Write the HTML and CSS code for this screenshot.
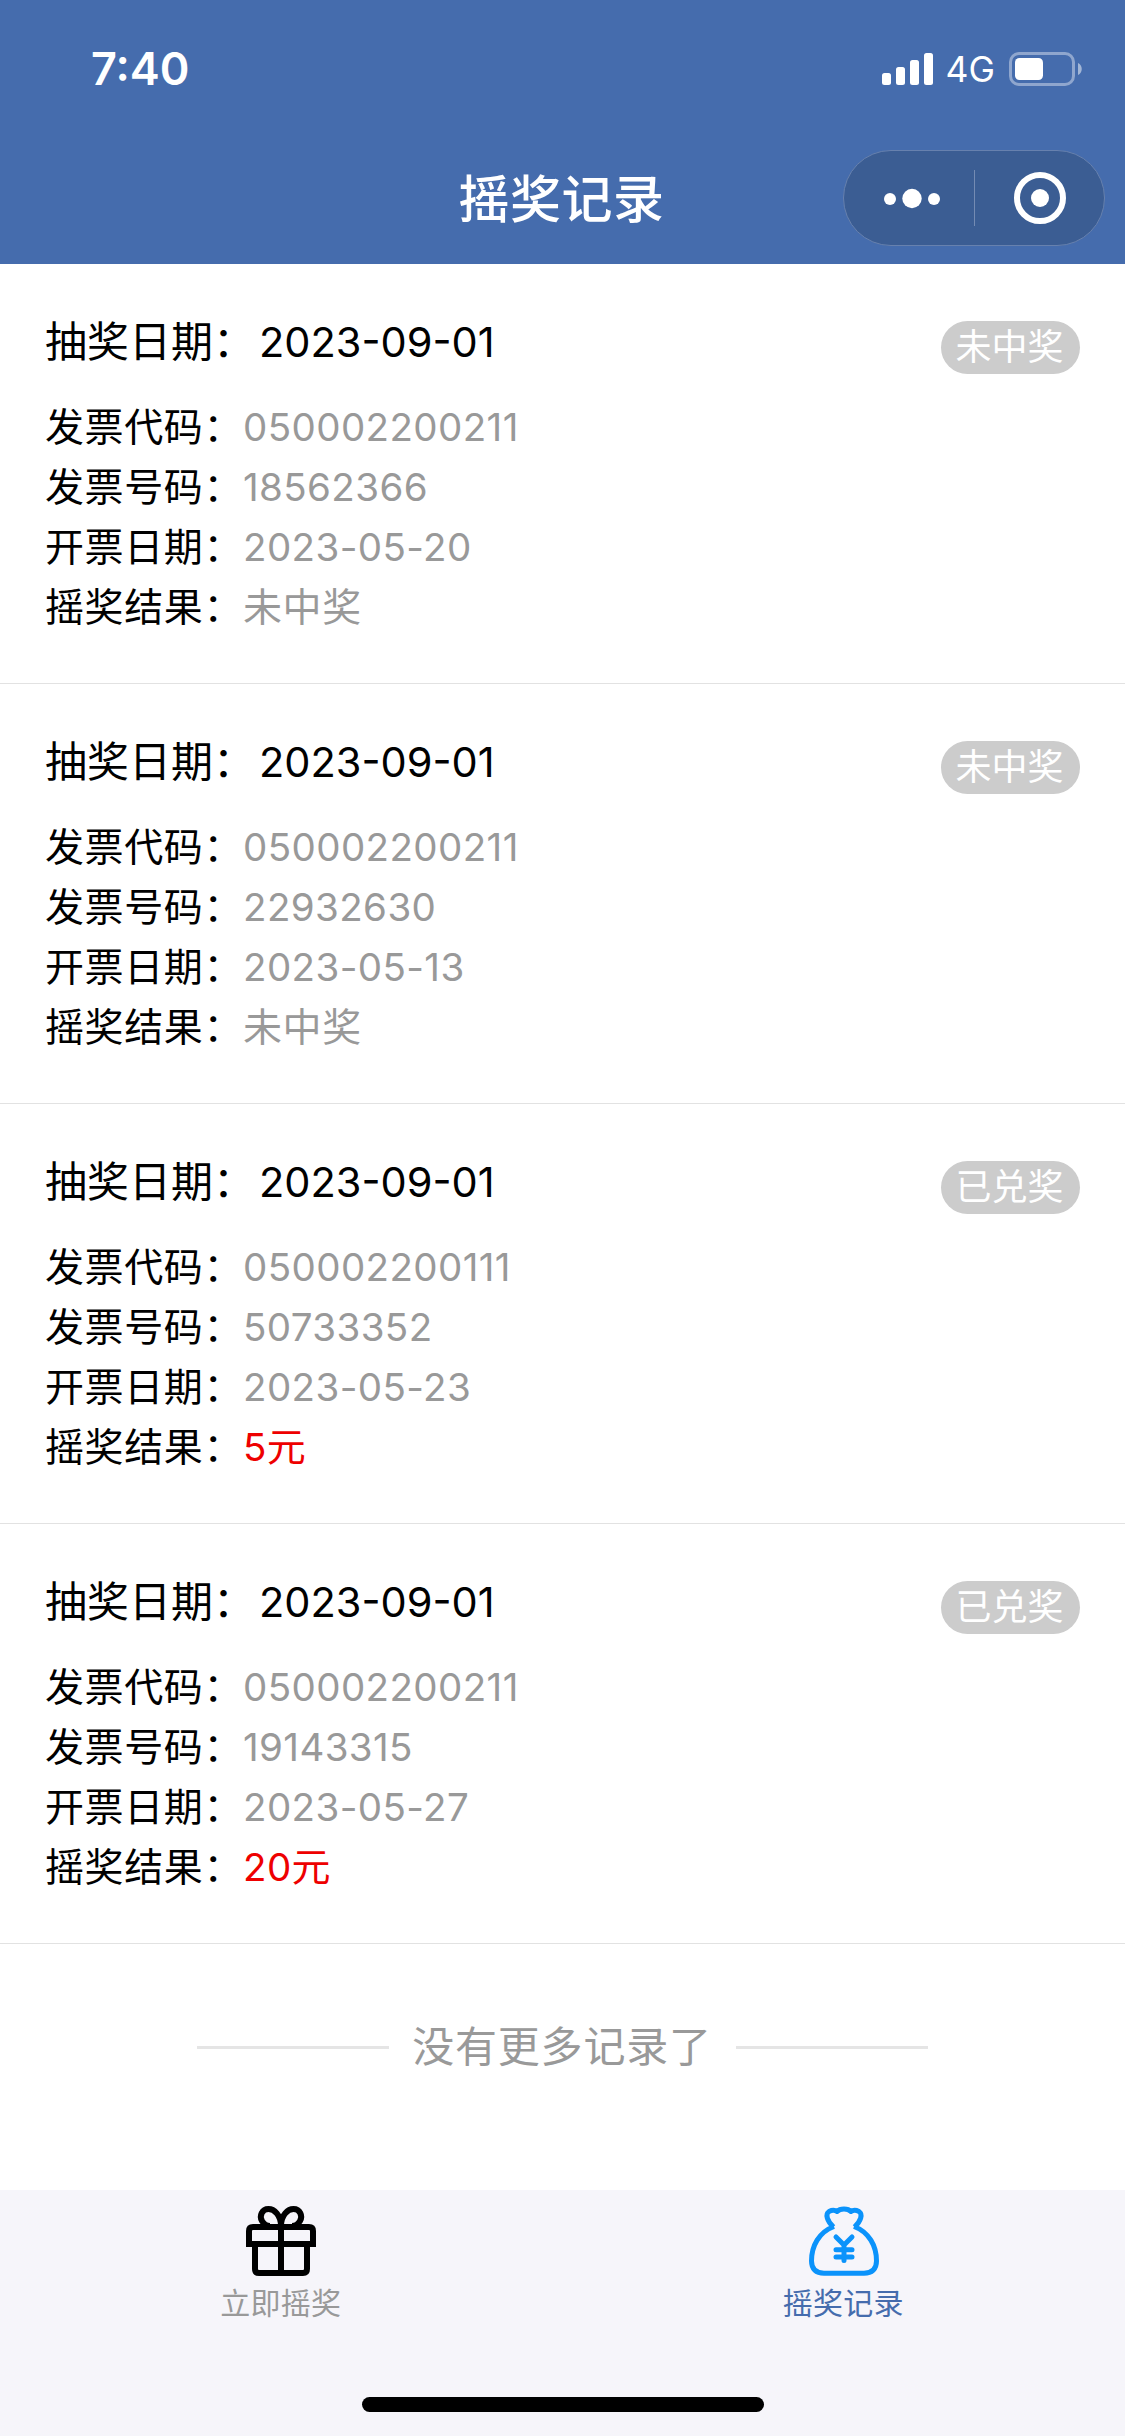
FILE: index.html
```html
<!DOCTYPE html>
<html lang="zh-CN">
<head>
<meta charset="utf-8">
<title>摇奖记录</title>
<link rel="stylesheet" href="styles.css">
</head>
<body>
<header class="header">
  <div class="status">
    <span class="time">7:40</span>
    <div class="status-icons">
      <svg class="signal" width="51" height="32" viewBox="0 0 51 32" fill="#fff"><rect x="0" y="20" width="9" height="12" rx="2.5"/><rect x="14" y="14" width="9" height="18" rx="2.5"/><rect x="28" y="7" width="9" height="25" rx="2.5"/><rect x="42" y="0" width="9" height="32" rx="2.5"/></svg>
      <span class="network">4G</span>
      <svg class="battery" width="73" height="34" viewBox="0 0 73 34"><rect x="1.5" y="1.5" width="63" height="31" rx="8.5" fill="none" stroke="#fff" stroke-opacity=".4" stroke-width="3"/><rect x="6" y="6" width="28" height="22" rx="4.5" fill="#fff"/><path d="M69 11c5 2 5 10 0 12z" fill="#fff" fill-opacity=".5"/></svg>
    </div>
  </div>
  <div class="navbar">
    <h1 class="title">摇奖记录</h1>
    <div class="capsule">
      <svg width="262" height="96" viewBox="0 0 262 96"><rect x=".5" y=".5" width="261" height="95" rx="47.5" fill="#3b5d93" stroke="#6781ae"/><g fill="#fff"><circle cx="47" cy="49" r="6"/><circle cx="69" cy="48.500" r="9.700"/><circle cx="91" cy="49" r="6"/><circle cx="197" cy="48" r="9"/></g><path d="M131.500 20v56" stroke="#748bb3"/><circle cx="197" cy="48" r="23" fill="none" stroke="#fff" stroke-width="6"/></svg>
    </div>
  </div>
</header>
<main class="records">
  <article class="record">
    <div class="record-head"><p class="date">抽奖日期：<span class="num">2023-09-01</span></p><span class="badge">未中奖</span></div>
    <p class="row">发票代码：<span class="num">050002200211</span></p>
    <p class="row">发票号码：<span class="num">18562366</span></p>
    <p class="row">开票日期：<span class="num">2023-05-20</span></p>
    <p class="row">摇奖结果：<span class="value">未中奖</span></p>
  </article>
  <article class="record">
    <div class="record-head"><p class="date">抽奖日期：<span class="num">2023-09-01</span></p><span class="badge">未中奖</span></div>
    <p class="row">发票代码：<span class="num">050002200211</span></p>
    <p class="row">发票号码：<span class="num">22932630</span></p>
    <p class="row">开票日期：<span class="num">2023-05-13</span></p>
    <p class="row">摇奖结果：<span class="value">未中奖</span></p>
  </article>
  <article class="record">
    <div class="record-head"><p class="date">抽奖日期：<span class="num">2023-09-01</span></p><span class="badge">已兑奖</span></div>
    <p class="row">发票代码：<span class="num">050002200111</span></p>
    <p class="row">发票号码：<span class="num">50733352</span></p>
    <p class="row">开票日期：<span class="num">2023-05-23</span></p>
    <p class="row">摇奖结果：<span class="prize"><span class="num">5</span>元</span></p>
  </article>
  <article class="record">
    <div class="record-head"><p class="date">抽奖日期：<span class="num">2023-09-01</span></p><span class="badge">已兑奖</span></div>
    <p class="row">发票代码：<span class="num">050002200211</span></p>
    <p class="row">发票号码：<span class="num">19143315</span></p>
    <p class="row">开票日期：<span class="num">2023-05-27</span></p>
    <p class="row">摇奖结果：<span class="prize"><span class="num">20</span>元</span></p>
  </article>
  <div class="end"><span class="end-text">没有更多记录了</span></div>
</main>
<nav class="tabbar">
  <div class="tabs">
    <a class="tab">
      <svg width="70" height="70" viewBox="0 0 70 70" fill="none" stroke="#000" stroke-width="6"><path d="M3 38V25q0-4 4-4h56q4 0 4 4v13z M9 38v25q0 4 4 4h44q4 0 4-4V38 M35 21v46"/><path d="M35 20C35 9 28 3 22.500 3 16 3 13 10 16 15q3 5 8 5"/><path d="M35 20C35 9 42 3 47.500 3 54 3 57 10 54 15q-3 5-8 5"/></svg>
      <span class="tab-label">立即摇奖</span>
    </a>
    <a class="tab active">
      <svg width="70" height="70" viewBox="0 0 70 70" fill="none" stroke="#0b93fb" stroke-width="5"><path d="M24.500 21C18 15 16 8 20 5.500 23 4 26 4 28 5.500 31 2 39 2 42 5.500 44 4 47 4 50 5.500 54 8 52 15 45.500 21" stroke-linejoin="round"/><path d="M25 20.500C10 26 2.500 40 2.500 55 2.500 63 7 67.200 15 67.200H55C63 67.200 67.500 63 67.500 55 67.500 40 60 26 45 20.500"/><path d="M27 31l8 8 8-8M35 39v15.500M27 43.700h16M27 51h16" stroke-linecap="round"/></svg>
      <span class="tab-label">摇奖记录</span>
    </a>
  </div>
  <div class="home-indicator"></div>
</nav>
</body>
</html>
```
FILE: styles.css
```css
* { box-sizing: border-box; }
body {
  margin: 0;
  width: 1125px;
  height: 2436px;
  display: flex;
  flex-direction: column;
  background: #fff;
  color: #000;
  font-family: "Noto Sans CJK SC", sans-serif;
}
p, h1 { margin: 0; }
svg { display: block; flex: none; }

.header { height: 264px; background: #456cad; color: #fff; }
.status {
  height: 138px;
  padding: 0 43px 0 91px;
  display: flex;
  justify-content: space-between;
  align-items: center;
  font-family: Inter, sans-serif;
}
.time { font-size: 45px; font-weight: 600; letter-spacing: 0; line-height: 54px; }
.status-icons { display: flex; align-items: center; }
.network { font-size: 35.500px; font-weight: 400; line-height: 40px; margin: 1px 14px 0 13px; }
.navbar {
  height: 120px;
  padding: 0 20px;
  display: grid;
  grid-template-columns: 262px 1fr 262px;
  align-items: center;
}
.title {
  grid-column: 2;
  text-align: center;
  font-size: 51px;
  font-weight: 500;
  letter-spacing: 0.5px;
  line-height: 60px;
  padding: 0 2px 4px 0;
}

.record {
  height: 420px;
  padding: 45px 45px 0;
  border-bottom: 1px solid #e2e2e2;
}
.record-head { display: flex; justify-content: space-between; margin-bottom: 20px; }
.date { font-size: 42px; line-height: 60px; }
.date .num { margin-left: 4px; letter-spacing: 0; font-size: 41.500px; }
.num { font-family: Inter, "Noto Sans CJK SC", sans-serif; line-height: 1; }
.badge {
  margin-top: 12px;
  width: 139px;
  height: 53px;
  padding-right: 2px;
  border-radius: 27px;
  background: #ccc;
  color: #fff;
  font-size: 36px;
  line-height: 46px;
  text-align: center;
}
.row { font-size: 39px; letter-spacing: 0.600px; line-height: 60px; }
.row > .num, .value { color: #999; }
.row .num { font-size: 38.500px; letter-spacing: 0.400px; }
.prize { color: #ee0000; }

.end {
  height: 206px;
  padding: 0 197px;
  display: flex;
  align-items: center;
  justify-content: space-between;
}
.end::before, .end::after { content: ""; width: 192px; height: 3px; background: #e5e5e5; }
.end-text { color: #999; font-size: 42px; letter-spacing: 0.8px; line-height: 60px; padding: 0 1px 6px 0; }

.tabbar {
  margin-top: auto;
  height: 246px;
  background: #f6f5fa;
  display: flex;
  flex-direction: column;
  justify-content: space-between;
  align-items: center;
  padding: 16px 0 24px;
}
.tabs { width: 100%; display: grid; grid-template-columns: 1fr 1fr; }
.tab { display: flex; flex-direction: column; align-items: center; color: #999; }
.tab.active { color: #456cad; }
.tab-label { margin-top: 4px; padding-right: 1px; font-size: 30px; letter-spacing: 0.2px; line-height: 42px; }
.home-indicator { width: 402px; height: 15px; border-radius: 8px; background: #000; }
```
